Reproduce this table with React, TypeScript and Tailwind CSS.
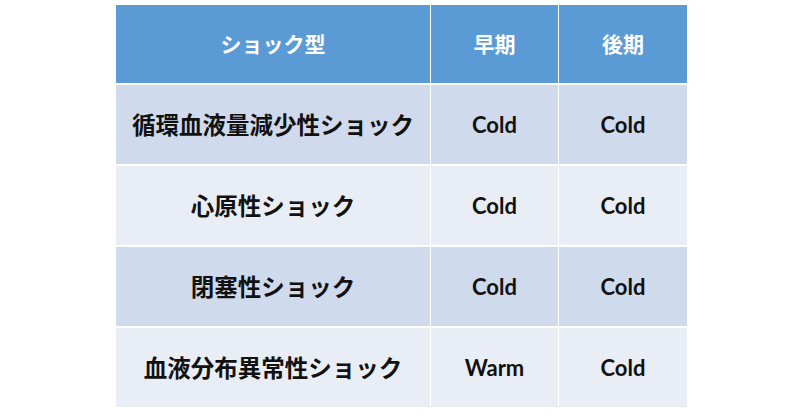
const rows: [string, string, string][] = [
  ['循環血液量減少性ショック', 'Cold', 'Cold'],
  ['心原性ショック', 'Cold', 'Cold'],
  ['閉塞性ショック', 'Cold', 'Cold'],
  ['血液分布異常性ショック', 'Warm', 'Cold'],
];

const headCell =
  "flex h-[78px] items-center justify-center bg-[#5b9bd5] text-[21px] font-bold text-white font-['Noto_Sans_CJK_JP',sans-serif]";

export default function App() {
  return (
    <div className="h-[419px] w-[800px] bg-white pl-[116px] pt-[5px]">
      <div className="grid w-[571px] grid-cols-[314px_127px_128px] gap-x-px gap-y-[2px] bg-white">
        <div className={headCell}>ショック型</div>
        <div className={headCell}>早期</div>
        <div className={headCell}>後期</div>
        {rows.map(([name, early, late], i) => {
          const odd = i % 2 === 0;
          return [
            <div
              key={`${i}-n`}
              className={clsx(
                "flex h-[79px] items-center justify-center text-[23.5px] font-bold text-[#111] font-['Noto_Sans_CJK_JP',sans-serif]",
                odd ? 'bg-[#cfdaec]' : 'bg-[#e9edf5]',
              )}
            >
              {name}
            </div>,
            <div
              key={`${i}-e`}
              className={clsx(
                "flex h-[79px] items-center justify-center text-[22px] font-bold text-[#111] font-['Lato','Noto_Sans_CJK_JP',sans-serif]",
                odd ? 'bg-[#cfdaec]' : 'bg-[#e9edf5]',
              )}
            >
              {early}
            </div>,
            <div
              key={`${i}-l`}
              className={clsx(
                "flex h-[79px] items-center justify-center text-[22px] font-bold text-[#111] font-['Lato','Noto_Sans_CJK_JP',sans-serif]",
                odd ? 'bg-[#cfdaec]' : 'bg-[#e9edf5]',
              )}
            >
              {late}
            </div>,
          ];
        })}
      </div>
    </div>
  );
}

import clsx from 'clsx';
